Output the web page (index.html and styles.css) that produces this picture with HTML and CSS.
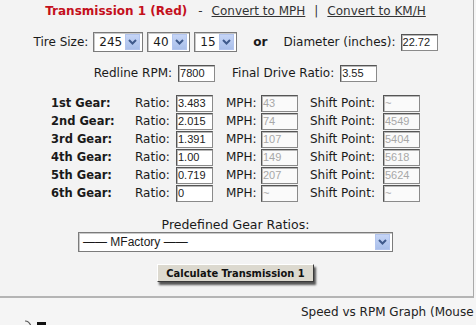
FILE: index.html
```html
<!DOCTYPE html>
<html lang="en">
<head>
    <meta charset="UTF-8">
    <title>Transmission Calculator</title>
    <link rel="stylesheet" href="styles.css">
</head>
<body>

    <div class="panel">
        <div class="title">
            <span class="trans-name">Transmission 1 (Red)</span>
            <span class="sep">-</span>
            <a href="#">Convert to MPH</a>
            <span class="sep">|</span>
            <a href="#">Convert to KM/H</a>
        </div>

        <div class="row tire-row">
            <span>Tire Size:</span>
            <span class="dropdown wide">
                <span class="value">245</span>
                <span class="arrow"><svg width="9" height="6" viewBox="0 0 9 6"><path d="M1 1 L4.5 4.5 L8 1" fill="none" stroke="#3f5a8c" stroke-width="2"/></svg></span>
            </span>
            <span class="dropdown">
                <span class="value">40</span>
                <span class="arrow"><svg width="9" height="6" viewBox="0 0 9 6"><path d="M1 1 L4.5 4.5 L8 1" fill="none" stroke="#3f5a8c" stroke-width="2"/></svg></span>
            </span>
            <span class="dropdown">
                <span class="value">15</span>
                <span class="arrow"><svg width="9" height="6" viewBox="0 0 9 6"><path d="M1 1 L4.5 4.5 L8 1" fill="none" stroke="#3f5a8c" stroke-width="2"/></svg></span>
            </span>
            <b class="or">or</b>
            <span>Diameter (inches):</span>
            <input class="box" type="text" value="22.72">
        </div>

        <div class="row redline-row">
            <span>Redline RPM:</span>
            <input class="box" type="text" value="7800">
            <span class="spaced">Final Drive Ratio:</span>
            <input class="box" type="text" value="3.55">
        </div>

        <div class="gears">
            <b>1st Gear:</b><span>Ratio:</span><input class="box" value="3.483"><span>MPH:</span><input class="box off" value="43" disabled><span>Shift Point:</span><input class="box off" value="~" disabled>
            <b>2nd Gear:</b><span>Ratio:</span><input class="box" value="2.015"><span>MPH:</span><input class="box off" value="74" disabled><span>Shift Point:</span><input class="box off" value="4549" disabled>
            <b>3rd Gear:</b><span>Ratio:</span><input class="box" value="1.391"><span>MPH:</span><input class="box off" value="107" disabled><span>Shift Point:</span><input class="box off" value="5404" disabled>
            <b>4th Gear:</b><span>Ratio:</span><input class="box" value="1.00"><span>MPH:</span><input class="box off" value="149" disabled><span>Shift Point:</span><input class="box off" value="5618" disabled>
            <b>5th Gear:</b><span>Ratio:</span><input class="box" value="0.719"><span>MPH:</span><input class="box off" value="207" disabled><span>Shift Point:</span><input class="box off" value="5624" disabled>
            <b>6th Gear:</b><span>Ratio:</span><input class="box" value="0"><span>MPH:</span><input class="box off" value="~" disabled><span>Shift Point:</span><input class="box off" value="~" disabled>
        </div>

        <div class="predef-label">Predefined Gear Ratios:</div>
        <div class="predef">
            <span class="dropdown long">
                <span class="value small">—— MFactory ——</span>
                <span class="arrow"><svg width="9" height="6" viewBox="0 0 9 6"><path d="M1 1 L4.5 4.5 L8 1" fill="none" stroke="#3f5a8c" stroke-width="2"/></svg></span>
            </span>
        </div>

        <div class="actions">
            <button>Calculate Transmission 1</button>
        </div>
    </div>

    <div class="graph-head">Speed vs RPM Graph (Mouse over for details)</div>
    <div class="graph-icon">
        <svg width="26" height="6" viewBox="0 0 26 6"><path d="M1 1 Q5 1 7 6" fill="none" stroke="#555" stroke-width="1.2"/><rect x="13" y="2" width="9" height="4" fill="#111"/></svg>
    </div>

</body>
</html>
```

FILE: styles.css
```css
body {
    font-family: "DejaVu Sans", Verdana, sans-serif;
    font-size: 12px;
    color: #1a1a1a;
    background-color: #f5f5f5;
    margin: 0;
    overflow: hidden;
}
.panel {
    width: 474px;
    height: 298px;
    box-sizing: border-box;
    padding-right: 2px;
    background-color: #f3f3f3;
    border-right: 1px solid #a9a9a9;
    border-bottom: 2px solid #b4b4b4;
}
.title {
    height: 21px;
    display: flex;
    align-items: center;
    justify-content: center;
    gap: 9px;
}
.trans-name {
    color: #c4101c;
    font-weight: bold;
    margin-right: 2px;
}
.sep {
    color: #333;
}
.title a {
    color: #333;
}
.row {
    display: flex;
    align-items: center;
    justify-content: center;
}
.tire-row {
    margin-top: 11px;
    height: 20px;
    gap: 4px;
}
.tire-row > span:first-child {
    margin-right: 1px;
}
.or {
    margin: 0 12px;
}
.tire-row input {
    margin-left: 1px;
}
.redline-row {
    margin-top: 12px;
    height: 18px;
    gap: 6px;
}
.spaced {
    margin-left: 11px;
}
.box {
    width: 37px;
    height: 17px;
    box-sizing: border-box;
    margin: 0;
    padding: 0 1px;
    font-family: "Liberation Sans", Arial, sans-serif;
    font-size: 11px;
    color: #222;
    background-color: #fff;
    border: 1px solid #8a8a8a;
    border-top-color: #555;
    border-left-color: #555;
    box-shadow: inset 1px 1px 0 #b8b8b8;
    outline: none;
}
.box.off {
    color: #a8a8a8;
    background-color: #fafafa;
}
.dropdown {
    position: relative;
    display: inline-flex;
    align-items: center;
    width: 43px;
    height: 20px;
    box-sizing: border-box;
    background-color: #fff;
    border: 1px solid #7b7b7b;
    box-shadow: inset 1px 1px 0 #c9c9c9;
}
.dropdown.wide {
    width: 50px;
}
.dropdown.long {
    width: 315px;
}
.value {
    padding-left: 5px;
}
.value.small {
    font-family: "Liberation Sans", Arial, sans-serif;
    font-size: 12px;
    padding-left: 4px;
}
.arrow {
    position: absolute;
    right: 2px;
    top: 1px;
    width: 15px;
    height: 16px;
    display: flex;
    align-items: center;
    justify-content: center;
    background: linear-gradient(#c6d5f6, #a9bfea);
    border: 1px solid #b3c5ee;
    box-sizing: border-box;
}
.gears {
    margin-top: 12px;
    display: grid;
    grid-template-columns: 84px 41px 50px 35px 49px 73px 37px;
    grid-auto-rows: 18px;
    align-items: center;
    justify-content: center;
}
.gears b {
    font-size: 11.5px;
}
.predef-label {
    margin-top: 16px;
    height: 14px;
    line-height: 14px;
    text-align: center;
    font-size: 12.5px;
}
.predef {
    display: flex;
    justify-content: center;
}
.actions {
    display: flex;
    justify-content: center;
    margin-top: 12px;
}
button {
    width: 157px;
    height: 18px;
    padding: 0;
    font-family: "DejaVu Sans Condensed", "DejaVu Sans", sans-serif;
    font-stretch: condensed;
    font-weight: bold;
    font-size: 11px;
    color: #111;
    background-color: #dcd9cf;
    border: 1px solid;
    border-color: #fff #3a3a3a #3a3a3a #fff;
    box-shadow: 2px 3px 2px rgba(0, 0, 0, 0.65);
}
.graph-head {
    margin-top: 7px;
    padding-left: 301px;
    height: 14px;
    line-height: 14px;
    white-space: nowrap;
    color: #222;
}
.graph-icon {
    padding-left: 24px;
    margin-top: 1px;
    height: 6px;
}
.graph-icon svg {
    display: block;
}
```
